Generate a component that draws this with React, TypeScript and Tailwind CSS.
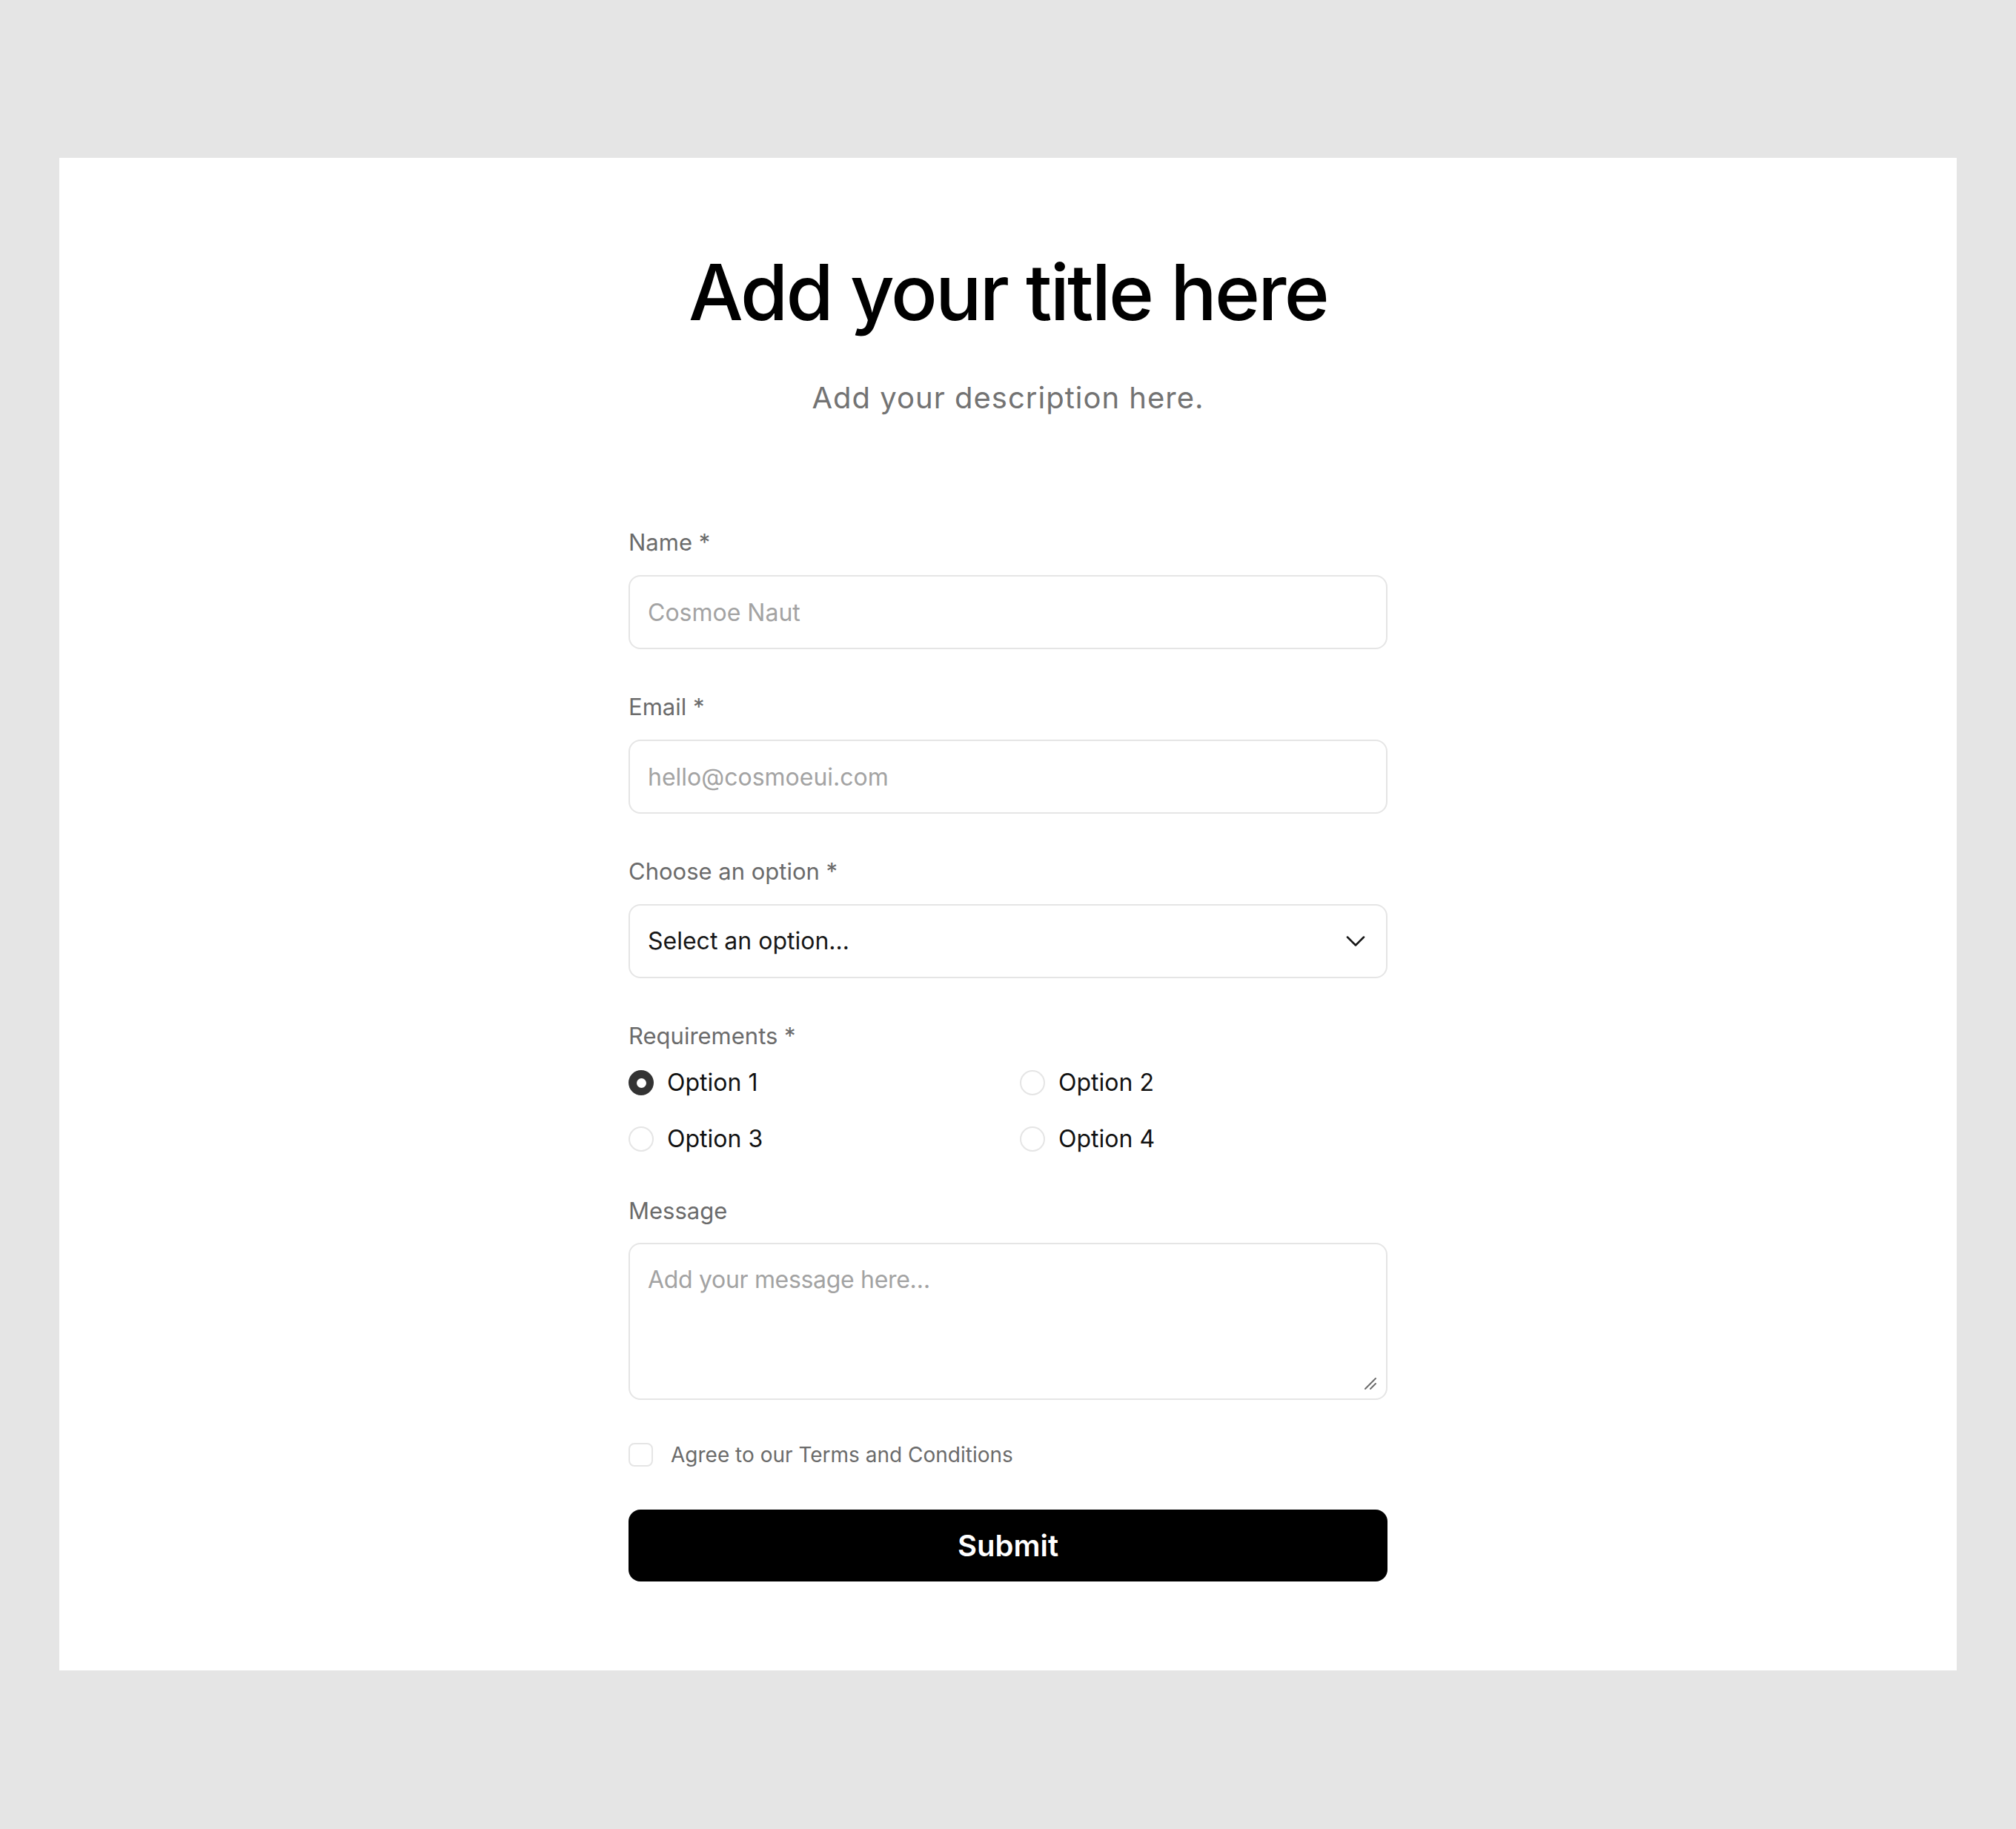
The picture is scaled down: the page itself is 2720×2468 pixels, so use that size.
import { ChevronDown } from "lucide-react";

function Label({ children }: { children: React.ReactNode }) {
  return <div className="text-[31px] leading-[44px] text-[#6b6b6b]">{children}</div>;
}

function Radio({ label, checked }: { label: string; checked?: boolean }) {
  return (
    <div className="flex items-center h-[44px] gap-[18px]">
      {checked ? (
        <div className="w-[34px] h-[34px] rounded-full bg-[#333333] flex items-center justify-center">
          <div className="w-[13px] h-[13px] rounded-full bg-white" />
        </div>
      ) : (
        <div className="w-[34px] h-[34px] rounded-full border-2 border-[#e5e5e5] bg-white" />
      )}
      <span className="text-[32px] leading-[44px] text-[#111111]">{label}</span>
    </div>
  );
}

export default function App() {
  return (
    <div className="min-h-[2468px] bg-[#e5e5e5] pt-[213px] px-[80px] font-[Inter,sans-serif]">
      <div className="bg-white h-[2041px] pt-[125px] flex flex-col items-center">
        <h1 className="text-[104px] leading-[112px] font-medium tracking-[-0.027em] text-black">
          Add your title here
        </h1>
        <p className="mt-[59px] text-[40px] leading-[56px] tracking-[0.025em] text-[#737373]">
          Add your description here.
        </p>

        <form className="mt-[145px] w-[1024px] flex flex-col" onSubmit={(e) => e.preventDefault()}>
          <Label>Name *</Label>
          <input
            className="mt-[22px] h-[100px] w-full rounded-[16px] border-2 border-[#e5e5e5] px-6 text-[32px] text-[#171717] placeholder:text-[#a3a3a3] outline-none"
            placeholder="Cosmoe Naut"
          />

          <div className="mt-[56px]">
            <Label>Email *</Label>
          </div>
          <input
            className="mt-[22px] h-[100px] w-full rounded-[16px] border-2 border-[#e5e5e5] px-6 text-[32px] text-[#171717] placeholder:text-[#a3a3a3] outline-none"
            placeholder="hello@cosmoeui.com"
          />

          <div className="mt-[56px]">
            <Label>Choose an option *</Label>
          </div>
          <button
            type="button"
            className="mt-[22px] h-[100px] w-full rounded-[16px] border-2 border-[#e5e5e5] pl-6 pr-[19px] flex items-center justify-between text-[32px] text-[#171717]"
          >
            <span>Select an option…</span>
            <ChevronDown size={44} strokeWidth={1.4} color="#171717" />
          </button>

          <div className="mt-[56px]">
            <Label>Requirements *</Label>
          </div>
          <div className="mt-[19px] grid grid-cols-2 gap-x-[32px] gap-y-[32px]">
            <Radio label="Option 1" checked />
            <Radio label="Option 2" />
            <Radio label="Option 3" />
            <Radio label="Option 4" />
          </div>

          <div className="mt-[53px]">
            <Label>Message</Label>
          </div>
          <div className="relative mt-[21px]">
            <textarea
              className="block h-[212px] w-full rounded-[16px] border-2 border-[#e5e5e5] px-6 py-6 text-[32px] leading-[48px] tracking-[-0.01em] text-[#171717] placeholder:text-[#a3a3a3] outline-none resize-none"
              placeholder="Add your message here…"
            />
            <svg
              className="absolute right-[14px] bottom-[13px] pointer-events-none"
              width="18"
              height="18"
              viewBox="0 0 18 18"
              fill="none"
            >
              <line x1="2" y1="16" x2="16" y2="2" stroke="#6b6b6b" strokeWidth="2" strokeLinecap="round" />
              <line x1="9" y1="16" x2="16" y2="9" stroke="#6b6b6b" strokeWidth="2" strokeLinecap="round" />
            </svg>
          </div>

          <div className="mt-[58px] flex items-center gap-[24px] h-[32px]">
            <div className="w-[33px] h-[32px] rounded-[8px] border-2 border-[#e5e5e5] bg-white" />
            <span className="text-[28px] leading-[32px] text-[#6b6b6b]">Agree to our Terms and Conditions</span>
          </div>

          <button
            type="submit"
            className="mt-[58px] h-[97px] w-full rounded-[16px] bg-black text-white text-[40px] font-semibold"
          >
            Submit
          </button>
        </form>
      </div>
    </div>
  );
}
